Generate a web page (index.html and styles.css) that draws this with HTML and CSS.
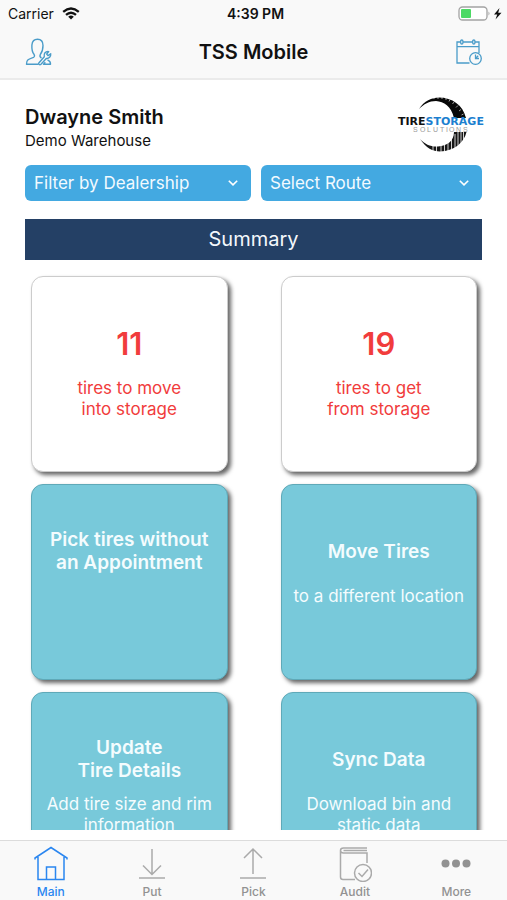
FILE: index.html
```html
<!DOCTYPE html>
<html lang="en">
<head>
<meta charset="utf-8">
<meta name="viewport" content="width=device-width, initial-scale=1">
<title>TSS Mobile</title>
<link rel="stylesheet" href="styles.css">
</head>
<body>
<header class="top">
  <div class="status">
    <div class="carrier">
      <span>Carrier</span>
      <svg width="18" height="13" viewBox="0 0 18 13" fill="none" stroke="#111" stroke-width="2.3" aria-hidden="true">
        <path d="M1.2 4.9Q9 -1.9 16.800 4.9"/><path d="M4 7.900Q9 3.500 14 7.900"/><path d="M6.200 9.700Q9 7.400 11.800 9.700L9 12.600Z" fill="#111" stroke="none"/>
      </svg>
    </div>
    <span class="clock">4:39 PM</span>
    <div class="power">
      <svg width="45" height="15" viewBox="0 0 45 15" aria-hidden="true">
        <rect x="1" y="1" width="28" height="13" rx="3.500" fill="#fff" stroke="#a3a3a3" stroke-width="1.300"/>
        <rect x="3" y="3" width="10" height="9" rx="1" fill="#4cd964"/>
        <path d="M30.500 5.500q2 2 0 4z" fill="#a3a3a3"/>
        <path d="M41.500 2L36 8.500h3.200L37.500 13.500L43.500 6.800h-3.300z" fill="#111"/>
      </svg>
    </div>
  </div>
  <div class="nav">
    <button class="icon-button" type="button" aria-label="Profile">
      <svg width="28" height="28" viewBox="0 0 28 28" fill="none" stroke="#4a9cc9" stroke-width="1.400" stroke-linejoin="round" aria-hidden="true">
        <path d="M14.500 26.200H2.500C2.300 22 4.500 21 9.500 19.300C10.800 18.700 10.700 17.500 10 16.300C8 14.200 7.700 11 7.900 7C8.300 3 10.800 1.300 13.500 1.300C17 1.300 19 3.500 19 7.500C19 11.500 18.300 14 16.300 16.500C15.600 18 15.900 19.200 17.500 20"/>
        <path d="M14.800 25L20.300 18.800C19.500 15.500 21.500 13.200 24.700 13.600L22.700 16L24 17.600L26.700 15.700C27 18.700 25 20.700 22.300 20.500L17 26.300C15.700 27.300 14 26.300 14.800 25Z"/>
        <path d="M23.500 21.800C25.800 22.800 26.700 24 26.500 26.200H19.500L21.300 24.300"/>
      </svg>
    </button>
    <h1>TSS Mobile</h1>
    <button class="icon-button" type="button" aria-label="Schedule">
      <svg width="28" height="28" viewBox="0 0 28 28" fill="none" stroke="#4a9cc9" stroke-width="1.300" aria-hidden="true">
        <path d="M14.500 25H2V4h3.500M8 4h9.500M20 4h4v11M2 8.700h22"/>
        <rect x="5.700" y="2" width="2.200" height="4" rx="1.100"/><rect x="17.700" y="2" width="2.200" height="4" rx="1.100"/>
        <circle cx="20.500" cy="20.500" r="5.800"/><path d="M20.500 16.500v4h3.500M20.500 20.500l2.700-2.700"/>
      </svg>
    </button>
  </div>
</header>

<main class="content">
  <section class="user">
    <div>
      <h2>Dwayne Smith</h2>
      <p>Demo Warehouse</p>
    </div>
    <svg class="logo" width="84" height="58" viewBox="0 0 84 58" role="img" aria-label="Tire Storage Solutions">
      <path d="M21 13C26 5 34 1.500 41 1.500C54 1.500 65 9 68 22H56C53 10 46 5.500 38 5C31 5 26 8 21 13Z" fill="#080808"/>
      <path d="M36 1.500v1.600M40 1v2M44 1v2M48 2v2M52 3.500l-1 2M56 6l-1.500 2M60 9.500l-2 2M63 13.500l-2 1.500M65.500 18l-2 1" stroke="#fff" stroke-width=".6"/>
      <path d="M22 43C28 52 35 55.500 42 55.500C56 55 66 47 68.500 36H56C56 45 49 50 40 50.500C33 51 27 48.500 22 43Z" fill="#161616"/>
      <path d="M35 49v8M38.500 49v8M43 49v8M46.500 47v10M50 46v10M53.500 43v12M57 38v15M60 36v15M63 36v12M65.500 36v10" stroke="#fff" stroke-width=".8"/>
      <text class="logo-name" x="0" y="29" font-size="11"><tspan fill="#111">TIRE</tspan><tspan fill="#1c7fcf">STORAGE</tspan></text>
      <g class="logo-sub" font-size="7" fill="#999"><text x="15" y="36">S</text><text x="22" y="36">O</text><text x="29" y="36">L</text><text x="35" y="36">U</text><text x="42" y="36">T</text><text x="48" y="36">I</text><text x="51" y="36">O</text><text x="58" y="36">N</text><text x="65" y="36">S</text></g>
    </svg>
  </section>

  <form class="filters">
    <div class="picker">
      <select aria-label="Filter by Dealership"><option>Filter by Dealership</option></select>
      <svg width="10" height="6" viewBox="0 0 10 6" fill="none" stroke="#fff" stroke-width="1.600" aria-hidden="true"><path d="M.8.8L5 4.900L9.200.8"/></svg>
    </div>
    <div class="picker">
      <select aria-label="Select Route"><option>Select Route</option></select>
      <svg width="10" height="6" viewBox="0 0 10 6" fill="none" stroke="#fff" stroke-width="1.600" aria-hidden="true"><path d="M.8.8L5 4.900L9.200.8"/></svg>
    </div>
  </form>

  <h2 class="summary">Summary</h2>

  <section class="cards">
    <button class="card count" type="button"><strong>11</strong><span>tires to move<br>into storage</span></button>
    <button class="card count" type="button"><strong>19</strong><span>tires to get<br>from storage</span></button>
    <button class="card" type="button"><strong>Pick tires without<br>an Appointment</strong></button>
    <button class="card" type="button"><strong>Move Tires</strong><span>to a different location</span></button>
    <button class="card" type="button"><strong>Update<br>Tire Details</strong><span>Add tire size and rim<br>information</span></button>
    <button class="card" type="button"><strong>Sync Data</strong><span>Download bin and<br>static data</span></button>
  </section>
</main>

<nav class="tabs">
  <a class="tab active" href="#main" aria-current="page">
    <svg width="34" height="36" viewBox="0 0 34 36" fill="none" stroke="currentColor" stroke-width="1.500" aria-hidden="true"><path d="M1 13.500V12L17 1.500L33 12V13.500M4 11v22.500h26V11M12.500 33.500V21h9v12.500"/></svg>
    Main
  </a>
  <a class="tab" href="#put">
    <svg width="34" height="36" viewBox="0 0 34 36" fill="none" stroke="currentColor" stroke-width="1.500" aria-hidden="true"><path d="M17 3v25M8 19.500l9 9l9-9M4 32h26"/></svg>
    Put
  </a>
  <a class="tab" href="#pick">
    <svg width="34" height="36" viewBox="0 0 34 36" fill="none" stroke="currentColor" stroke-width="1.500" aria-hidden="true"><path d="M17 28V3M8 12l9-9l9 9M4 32h26"/></svg>
    Pick
  </a>
  <a class="tab" href="#audit">
    <svg width="34" height="36" viewBox="0 0 34 36" fill="none" stroke="currentColor" stroke-width="1.500" aria-hidden="true"><path d="M29 2H5.500C1.500 2 1.500 7 5.500 7H29V17M2.500 4.500V31C2.500 32.500 3.500 33.500 5 33.500H17M5.500 4.500H29"/><circle cx="25" cy="27" r="8.500"/><path d="M20.500 27l3.500 3.500l6-7"/></svg>
    Audit
  </a>
  <a class="tab" href="#more">
    <svg class="dots" width="34" height="36" viewBox="0 0 34 36" fill="currentColor" aria-hidden="true"><circle cx="6.500" cy="17.500" r="4"/><circle cx="17" cy="17.500" r="4"/><circle cx="27.500" cy="17.500" r="4"/></svg>
    More
  </a>
</nav>
</body>
</html>
```

FILE: styles.css
```css
* {
  box-sizing: border-box;
}

body {
  margin: 0;
  height: 100vh;
  display: flex;
  flex-direction: column;
  background: #fff;
  color: #111;
  font-family: Inter, "Liberation Sans", sans-serif;
}

h1, h2, p {
  margin: 0;
}

button, select {
  font-family: inherit;
}

svg {
  display: block;
}

.top {
  flex: none;
  background: #f9f9f9;
  border-bottom: 2px solid #ebebeb;
}

.status {
  display: grid;
  grid-template-columns: 1fr auto 1fr;
  align-items: center;
  height: 26px;
  padding: 0 4px 0 8px;
  font-size: 14px;
}

.carrier {
  display: flex;
  align-items: center;
  gap: 8px;
}

.clock {
  font-weight: 600;
}

.power {
  justify-self: end;
}

.nav {
  display: flex;
  align-items: center;
  justify-content: space-between;
  height: 52px;
  padding: 0 24px;
}

.nav h1 {
  font-size: 20px;
  font-weight: 600;
  line-height: 24px;
}

.icon-button {
  padding: 0;
  border: 0;
  background: none;
}

.content {
  flex: 1;
  min-height: 0;
  overflow: hidden;
  margin-bottom: 10px;
  padding: 16px 25px 0;
}

.user {
  display: flex;
  justify-content: space-between;
  align-items: flex-start;
}

.user h2 {
  margin-top: 8px;
  font-size: 20px;
  font-weight: 600;
  line-height: 26px;
}

.user p {
  font-size: 15px;
  line-height: 22px;
}

.logo {
  overflow: visible;
}

.logo-name {
  font-family: "DejaVu Sans", sans-serif;
  font-weight: 700;
}

.logo-sub {
  font-family: "Liberation Sans", sans-serif;
}

.filters {
  display: grid;
  grid-template-columns: 226fr 221fr;
  gap: 10px;
  margin-top: 11px;
}

.picker {
  display: grid;
  align-items: center;
}

.picker > * {
  grid-area: 1 / 1;
}

.picker svg {
  justify-self: end;
  margin-right: 13px;
  pointer-events: none;
}

.picker select {
  appearance: none;
  width: 100%;
  height: 36px;
  padding: 0 32px 0 9px;
  border: 0;
  border-radius: 6px;
  background: #43a9e1;
  color: #f2faff;
  font-size: 17px;
}

.summary {
  margin-top: 18px;
  background: #244065;
  color: #f4f8fc;
  font-size: 20px;
  font-weight: 400;
  line-height: 41px;
  text-align: center;
}

.cards {
  display: grid;
  grid-template-columns: 1fr 1fr;
  gap: 12px 53px;
  margin-top: 16px;
  padding: 0 5px 0 6px;
}

.card {
  display: flex;
  flex-direction: column;
  justify-content: flex-start;
  align-items: center;
  gap: 12px;
  height: 196px;
  padding: 43px 0 0;
  border: 1px solid #5fa9b8;
  border-radius: 12px;
  background: #78c9da;
  box-shadow: 3px 3px 4px #666;
  color: #f4fcfe;
  text-align: center;
  white-space: nowrap;
}

.card strong {
  display: flex;
  align-items: center;
  min-height: 46px;
  font-size: 19px;
  font-weight: 600;
  line-height: 23px;
}

.card span {
  font-size: 17px;
  line-height: 21px;
}

.card.count {
  border-color: #ccc;
  background: #fff;
  color: #f13c3c;
}

.card.count strong {
  font-size: 31px;
}

.tabs {
  flex: none;
  display: grid;
  grid-template-columns: repeat(5, 1fr);
  height: 60px;
  border-top: 1px solid #dcdcdc;
  background: #f9f9f9;
}

.tab {
  display: flex;
  flex-direction: column;
  align-items: center;
  padding-top: 5px;
  color: #929292;
  font-size: 12px;
  font-weight: 500;
  line-height: 20px;
  text-decoration: none;
}

.tab svg {
  color: #aaa;
}

.tab .dots {
  color: #929292;
}

.tab.active,
.tab.active svg {
  color: #2a86f0;
}
```
